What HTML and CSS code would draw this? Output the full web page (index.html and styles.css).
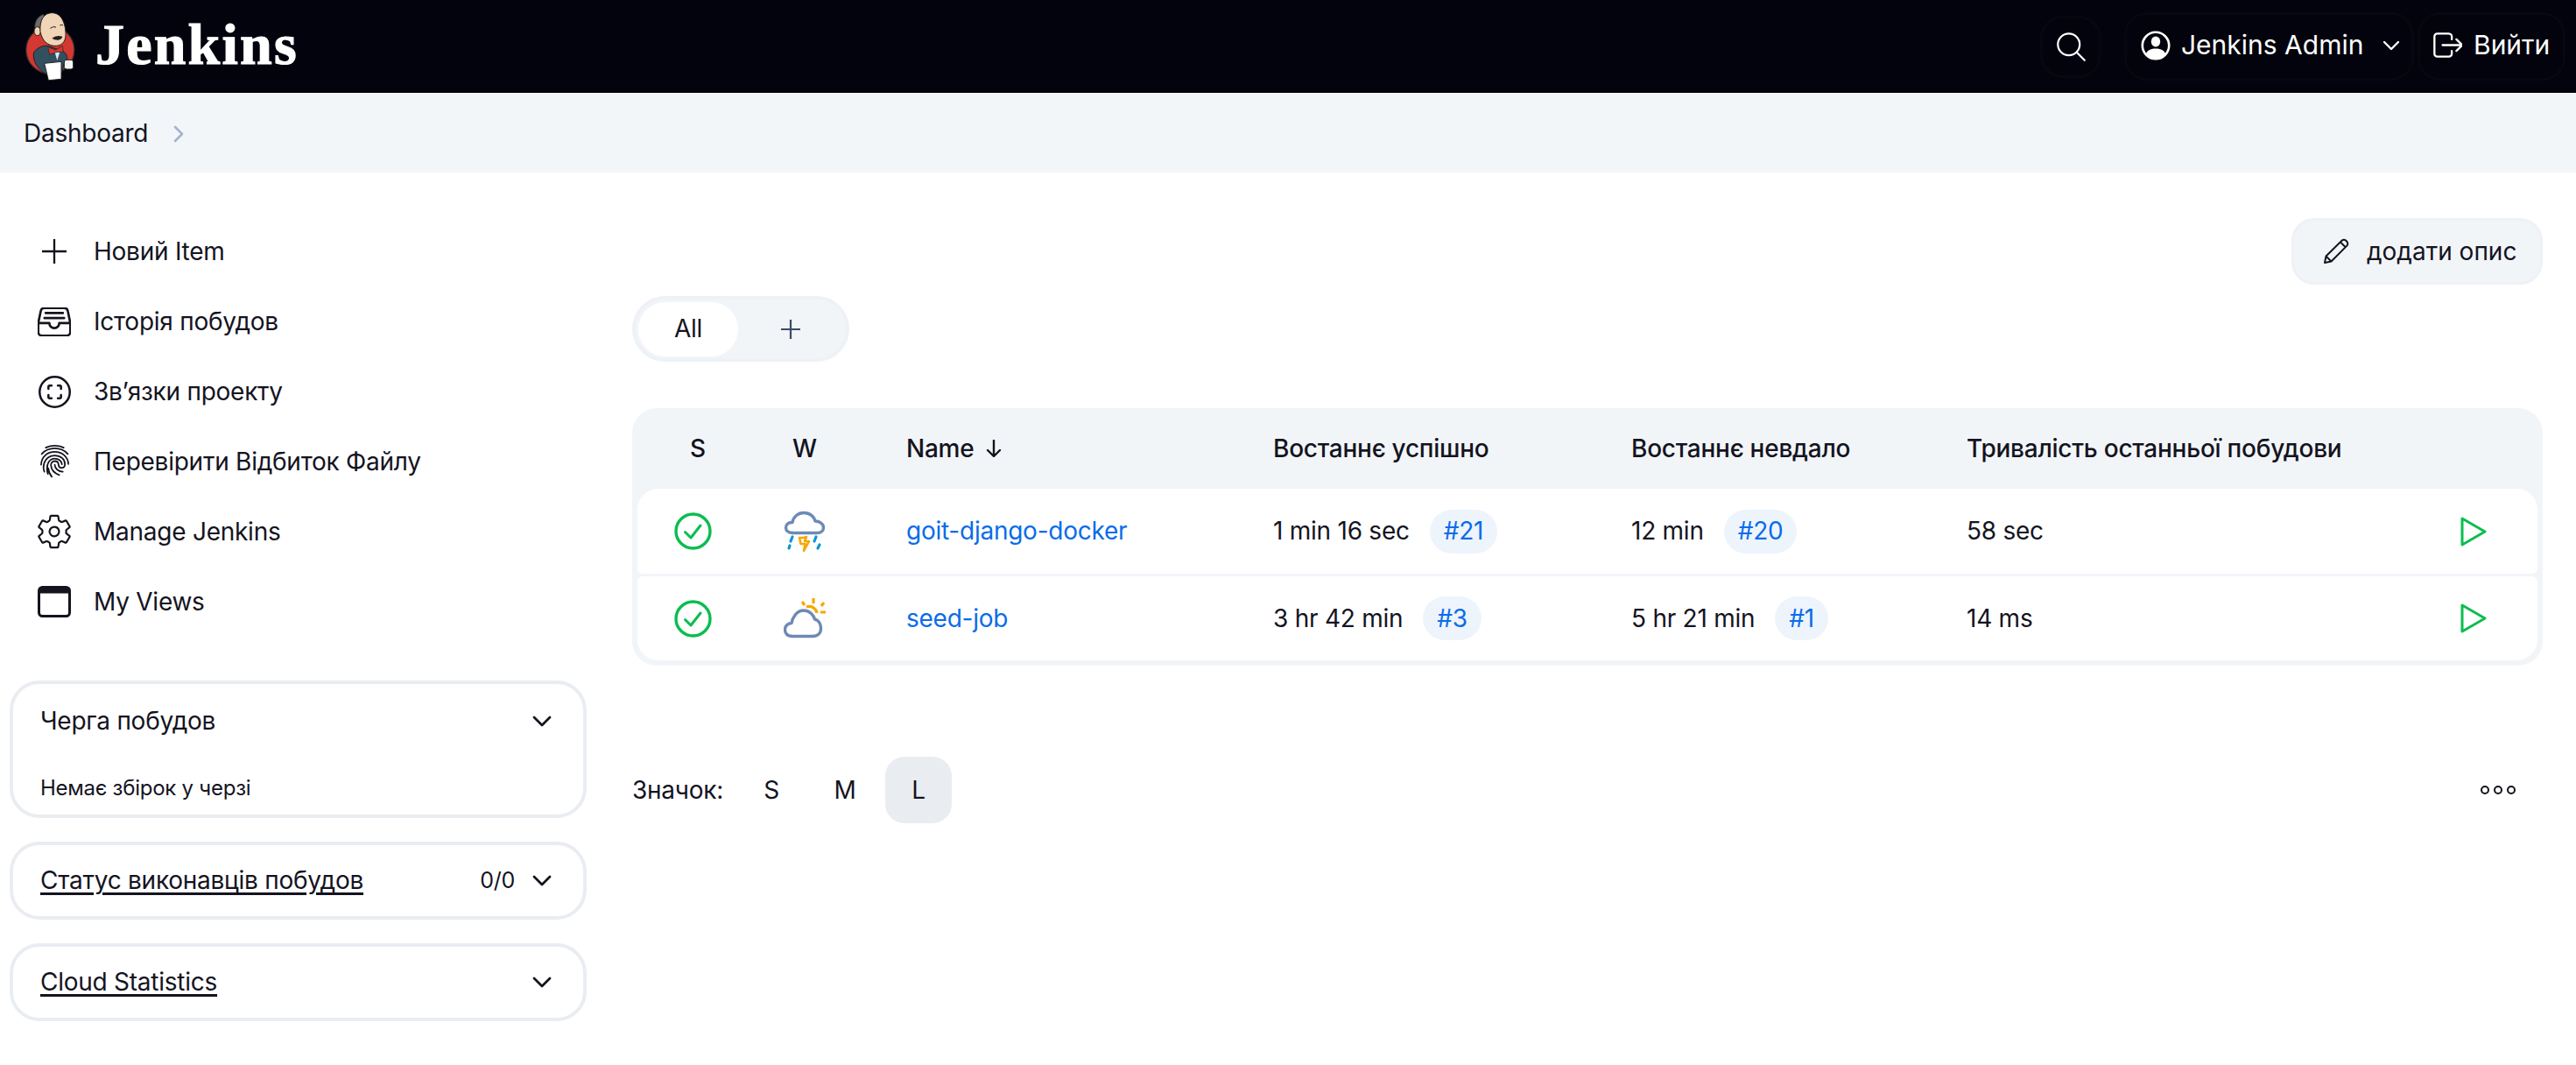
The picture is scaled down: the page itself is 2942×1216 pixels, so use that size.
FILE: index.html
```html
<!DOCTYPE html>
<html lang="uk">
<head>
<meta charset="utf-8">
<title>Dashboard [Jenkins]</title>
<link rel="stylesheet" href="styles.css">
</head>
<body>
<header class="topbar">
  <a class="brand">
    <svg class="mascot" viewBox="0 -9 240 318">
      <ellipse cx="112" cy="162" rx="83" ry="82" fill="#d33833" stroke="#2a2a2a" stroke-width="4"/>
      <path d="M60 92C55 65 70 45 90 40L100 80Z" fill="#6d6b6d" stroke="#231f20" stroke-width="3"/>
      <path d="M56 170C75 148 95 145 110 150L158 168C176 182 172 200 160 206L152 240L96 244C66 225 50 195 56 170Z" fill="#335061" stroke="#231f20" stroke-width="3"/>
      <ellipse cx="68" cy="98" rx="11" ry="15" fill="#f0d6b7" stroke="#231f20" stroke-width="3"/>
      <path d="M78 100C75 60 90 35 118 35C150 35 165 70 165 110C165 135 150 150 125 148C100 145 85 130 78 100Z" fill="#f0d6b7" stroke="#231f20" stroke-width="3"/>
      <path d="M112 88q10-8 20-4M145 78q6-4 11 0" fill="none" stroke="#231f20" stroke-width="3"/>
      <path d="M118 122q14-12 36-6q-2 10-16 12q-12 0-20-6Z" fill="#231f20"/>
      <path d="M128 170L146 166L136 198Z" fill="#dcebf5"/>
      <path d="M104 152L130 162L154 148L157 168L132 170L110 178Z" fill="#d33833" stroke="#231f20" stroke-width="2"/>
      <path d="M92 208L150 202L150 262L106 266Z" fill="#fff" stroke="#231f20" stroke-width="3"/>
      <rect x="160" y="196" width="31" height="32" rx="8" fill="#f4f4f4" stroke="#231f20" stroke-width="3"/>
    </svg>
    <span class="wordmark">Jenkins</span>
  </a>
  <div class="top-actions">
    <a class="top-btn top-search">
      <svg class="ico-search" viewBox="48 48 416 416"><path class="st" stroke-width="28" d="M221.09 64a157.09 157.09 0 10157.09 157.09A157.1 157.1 0 00221.09 64z"/><path class="st" stroke-width="28" d="M338.29 338.29L448 448"/></svg>
    </a>
    <a class="top-btn top-user">
      <svg class="ico-user" viewBox="0 0 34 34"><circle class="st" cx="17" cy="17" r="15.2" stroke-width="2.6"/><ellipse cx="17" cy="12.6" rx="5.2" ry="6" fill="currentColor"/><path d="M5.6 26.6C8 22 12 20.6 17 20.6s9 1.4 11.4 6C25.6 30 21.6 32 17 32S8.400 30 5.600 26.600Z" fill="currentColor"/></svg>
      <span class="user-name">Jenkins Admin</span>
      <svg class="ico-caret" viewBox="0 0 20 12"><path class="st" stroke-width="2.4" d="M2 2l8 8 8-8"/></svg>
    </a>
    <a class="top-btn top-logout">
      <svg class="ico-logout" viewBox="48 80 400 352"><path class="st" stroke-width="28" d="M304 336v40a40 40 0 01-40 40H104a40 40 0 01-40-40V136a40 40 0 0140-40h152c22.090 0 48 17.910 48 40v40M368 336l80-80-80-80M176 256h256"/></svg>
      <span>Вийти</span>
    </a>
  </div>
</header>

<nav class="crumbs">
  <a class="crumb">Dashboard</a>
  <svg class="crumb-sep" viewBox="0 0 12 20"><path class="st" stroke-width="2.600" d="M2 2l8 8-8 8"/></svg>
</nav>

<div class="layout">
  <aside class="sidebar">
    <ul class="tasks">
      <li class="task"><span class="task-ico"><svg class="i-plus" viewBox="112 112 288 288"><path class="st" stroke-width="24" d="M256 112v288M400 256H112"/></svg></span>Новий Item</li>
      <li class="task"><span class="task-ico"><svg class="i-38" viewBox="40 72 432 368" preserveAspectRatio="none"><path class="st" stroke-width="30" d="M384 80H128c-26 0-43 14-48 40L48 272v112a48.140 48.140 0 0048 48h320a48.140 48.140 0 0048-48V272l-32-152c-5-27-23-40-48-40z"/><path class="st" stroke-width="30" d="M48 272h144M320 272h144M192 272a64 64 0 00128 0M144 144h224M128 208h256"/></svg></span>Історія побудов</li>
      <li class="task"><span class="task-ico"><svg class="i-36" viewBox="50 50 412 412"><path class="st" stroke-width="28" d="M256 64C150 64 64 150 64 256s86 192 192 192 192-86 192-192S362 64 256 64z"/><path class="st" stroke-width="28" d="M296 176h24a16 16 0 0116 16v24M216 336h-24a16 16 0 01-16-16v-24M336 296v24a16 16 0 01-16 16h-24M176 216v-24a16 16 0 0116-16h24"/></svg></span>Зв’язки проекту</li>
      <li class="task"><span class="task-ico"><svg class="i-finger" viewBox="40 20 432 472"><path class="st" stroke-width="22" d="M130 60C200 24 312 24 382 60M72 150C130 85 200 70 256 70S385 85 440 150M64 300C70 190 150 120 256 120S445 190 448 290M110 400C90 350 100 300 110 270C130 210 190 170 256 170C340 170 400 225 400 290C400 325 380 345 355 345C325 345 312 325 310 300C308 270 285 250 256 250C225 250 200 275 203 310C208 370 250 420 320 445M160 430C145 390 145 340 155 300C170 250 210 215 256 215C310 215 355 250 358 295M256 300C258 350 300 395 370 400M215 470C190 440 170 400 165 350"/></svg></span>Перевірити Відбиток Файлу</li>
      <li class="task"><span class="task-ico"><svg class="i-gear" viewBox="32 32 448 448"><path class="st" stroke-width="26" d="M262.290 192.310a64 64 0 1057.400 57.400 64.130 64.130 0 00-57.400-57.400zM416.390 256a154.340 154.340 0 01-1.530 20.790l45.210 35.460a10.810 10.810 0 012.450 13.750l-42.770 74a10.810 10.810 0 01-13.140 4.590l-44.900-18.080a16.110 16.110 0 00-15.170 1.750A164.480 164.480 0 01325 400.800a15.940 15.940 0 00-8.820 12.140l-6.730 47.890a11.080 11.080 0 01-10.680 9.170h-85.540a11.110 11.110 0 01-10.690-8.870l-6.720-47.820a16.070 16.070 0 00-9-12.220 155.300 155.300 0 01-21.460-12.570 16 16 0 00-15.110-1.710l-44.890 18.070a10.810 10.810 0 01-13.140-4.580l-42.770-74a10.800 10.800 0 012.450-13.750l38.210-30a16.050 16.050 0 006-14.080c-.36-4.170-.58-8.330-.58-12.500s.21-8.270.58-12.350a16 16 0 00-6.070-13.940l-38.190-30A10.810 10.810 0 0149.48 186l42.770-74a10.810 10.810 0 0113.140-4.590l44.900 18.080a16.110 16.110 0 0015.170-1.750A164.480 164.480 0 01187 111.200a15.940 15.940 0 008.820-12.140l6.730-47.890A11.080 11.080 0 01213.230 42h85.540a11.110 11.110 0 0110.690 8.870l6.720 47.820a16.070 16.070 0 009 12.220 155.300 155.300 0 0121.460 12.570 16 16 0 0015.110 1.710l44.890-18.070a10.810 10.810 0 0113.140 4.580l42.770 74a10.800 10.800 0 01-2.450 13.750l-38.210 30a16.050 16.050 0 00-6.050 14.080c.33 4.140.55 8.300.55 12.470z"/></svg></span>Manage Jenkins</li>
      <li class="task"><span class="task-ico"><svg class="i-views" viewBox="0 0 38 36"><rect class="st" x="1.500" y="1.500" width="35" height="33" rx="4" stroke-width="3"/><path d="M1.500 5.500a4 4 0 014-4h27a4 4 0 014 4v3h-35z" fill="currentColor"/></svg></span>My Views</li>
    </ul>

    <section class="pane pane-queue">
      <div class="pane-head"><span class="pane-title">Черга побудов</span><svg class="pane-caret" viewBox="0 0 22 13"><path class="st" stroke-width="2.800" d="M2 2l9 9 9-9"/></svg></div>
      <p class="pane-empty">Немає збірок у черзі</p>
    </section>
    <section class="pane">
      <div class="pane-head"><a class="pane-title pane-link">Статус виконавців побудов</a><span class="pane-count">0/0</span><svg class="pane-caret" viewBox="0 0 22 13"><path class="st" stroke-width="2.800" d="M2 2l9 9 9-9"/></svg></div>
    </section>
    <section class="pane">
      <div class="pane-head"><a class="pane-title pane-link">Cloud Statistics</a><svg class="pane-caret" viewBox="0 0 22 13"><path class="st" stroke-width="2.800" d="M2 2l9 9 9-9"/></svg></div>
    </section>
  </aside>

  <main class="main">
    <a class="add-desc">
      <svg class="ico-pencil" viewBox="0 0 30 30"><path class="st" stroke-width="2" stroke-linejoin="round" d="M2 28l1.500-7.500L21.500 2.800a3.400 3.400 0 014.800 0l1 1a3.400 3.400 0 010 4.800L9.500 26.500ZM3.500 20.500l6 6M20 4.500l5.500 5.500"/></svg>
      <span>додати опис</span>
    </a>

    <div class="tabs">
      <a class="tab tab-active">All</a>
      <a class="tab tab-add"><svg class="ico-tabplus" viewBox="0 0 22 22"><path class="st" stroke-width="2.200" d="M11 0v22M0 11h22"/></svg></a>
    </div>

    <div class="jobs">
      <div class="jobs-row jobs-head">
        <span class="cell-center">S</span>
        <span class="cell-w">W</span>
        <span class="cell-name">Name <svg class="ico-sort" viewBox="0 0 18 20"><path class="st" stroke-width="2.400" d="M9 1v18M2 12l7 7 7-7"/></svg></span>
        <span>Востаннє успішно</span>
        <span>Востаннє невдало</span>
        <span>Тривалість останньої побудови</span>
        <span></span>
      </div>
      <div class="jobs-row job job-first">
        <svg class="ico-status" viewBox="0 0 43 43"><circle class="st" cx="21.500" cy="21.500" r="19.500" stroke-width="3.400"/><path class="st" stroke-width="3" d="M12.500 22.500l6.500 6.500 11-14"/></svg>
        <span class="cell-w">
          <svg class="ico-weather" viewBox="0 0 48 48"><path d="M11 25.500C5 25.500 2.500 22.500 2.500 19.500C2.500 15.500 6 13 10 13.500C11 7 16.500 2.500 23 2.500C30 2.500 35 7 36 12C41 12 45.500 15 45.500 19.500C45.500 23 42.500 25.500 38 25.500Z" fill="none" stroke="#6d8ab5" stroke-width="3.400" stroke-linejoin="round"/><path d="M18 31h5l3-1-2 5h5L23 46l1.500-8h-5Z" fill="none" stroke="#f5a800" stroke-width="2.600" stroke-linejoin="round"/><path d="M10 30l-2 5M7 40l-1 3M37 30l-2 5M41 39l-2 4" fill="none" stroke="#0a96d8" stroke-width="3.200" stroke-linecap="round"/></svg>
        </span>
        <a class="job-link">goit-django-docker</a>
        <span class="build"><span>1 min 16 sec</span><a class="badge">#21</a></span>
        <span class="build"><span>12 min</span><a class="badge">#20</a></span>
        <span>58 sec</span>
        <svg class="ico-play" viewBox="0 0 30 34"><path class="st" stroke-width="3" stroke-linejoin="round" d="M2 2L28 17 2 32Z"/></svg>
      </div>
      <div class="jobs-row job job-last">
        <svg class="ico-status" viewBox="0 0 43 43"><circle class="st" cx="21.500" cy="21.500" r="19.500" stroke-width="3.400"/><path class="st" stroke-width="3" d="M12.500 22.500l6.500 6.500 11-14"/></svg>
        <span class="cell-w">
          <svg class="ico-weather" viewBox="0 0 48 48"><path d="M26 11a9 9 0 0112 7M38 23" fill="none" stroke="#f5a800" stroke-width="3.200"/><path d="M34 1v6M21 5l3 4M46 6l-3 4M42 17h6" fill="none" stroke="#f5a800" stroke-width="3.200"/><path d="M10 44.500C4 44.500 1.500 41 1.500 37C1.500 33 4.500 29.500 9 29.500C10 23 15 15 23 15C30 15 34.500 21 35.500 25C39.500 26 42.500 30 42.500 35.500C42.500 41 39 44.500 33 44.500Z" fill="#fff" stroke="#6d8ab5" stroke-width="3.400" stroke-linejoin="round"/></svg>
        </span>
        <a class="job-link">seed-job</a>
        <span class="build"><span>3 hr 42 min</span><a class="badge">#3</a></span>
        <span class="build"><span>5 hr 21 min</span><a class="badge">#1</a></span>
        <span>14 ms</span>
        <svg class="ico-play" viewBox="0 0 30 34"><path class="st" stroke-width="3" stroke-linejoin="round" d="M2 2L28 17 2 32Z"/></svg>
      </div>
    </div>

    <div class="legend">
      <span class="legend-label">Значок:</span>
      <a class="size-btn">S</a>
      <a class="size-btn">M</a>
      <a class="size-btn size-active">L</a>
      <svg class="ico-dots" viewBox="0 0 42 12"><circle class="st" cx="6" cy="6" r="4" stroke-width="2"/><circle class="st" cx="21" cy="6" r="4" stroke-width="2"/><circle class="st" cx="36" cy="6" r="4" stroke-width="2"/></svg>
    </div>
  </main>
</div>
</body>
</html>
```
FILE: styles.css
```css
* { box-sizing: border-box; }
html, body { margin: 0; padding: 0; }
body {
  background: #fff;
  color: #14141f;
  font-family: Inter, "Noto Sans", sans-serif;
  font-size: 28px;
  font-weight: 400;
  letter-spacing: -0.25px;
  line-height: 1.3;
}
a { color: inherit; text-decoration: none; }
svg { display: block; flex: none; }
.st { fill: none; stroke: currentColor; stroke-linecap: round; stroke-linejoin: round; }

/* header */
.topbar {
  height: 106px;
  background: #02030c;
  color: #fff;
  display: flex;
  align-items: center;
  justify-content: space-between;
  padding: 0 12px 0 20px;
}
.brand { display: flex; align-items: center; gap: 10px; }
.mascot { width: 80px; height: 106px; }
.wordmark {
  font-family: "Liberation Serif", serif;
  font-weight: 700;
  font-size: 66px;
  letter-spacing: 2.2px;
  line-height: 1;
  -webkit-text-stroke: 1.2px #fff;
  margin-top: -4px;
  margin-left: -1px;
}
.top-actions { display: flex; align-items: center; gap: 4px; }
.top-btn {
  display: flex;
  align-items: center;
  border: 3px solid #06070f;
  border-radius: 26px;
  height: 78px;
  font-size: 30px;
  letter-spacing: 0;
  padding-bottom: 3px;
}
.top-search {
  width: 70px;
  height: 71px;
  justify-content: center;
  margin-right: 22px;
  padding-bottom: 0;
}
.ico-search { width: 33px; height: 33px; }
.top-user { width: 331px; padding-left: 16px; }
.ico-user { width: 34px; height: 34px; }
.user-name { margin-left: 12px; }
.ico-caret { width: 20px; height: 12px; margin-left: 22px; }
.top-logout { width: 169px; padding-left: 15px; gap: 13px; }
.ico-logout { width: 33px; height: 33px; }

/* breadcrumb */
.crumbs {
  height: 91px;
  background: #f3f6f9;
  display: flex;
  align-items: center;
  padding-left: 27px;
  padding-top: 2px;
  gap: 29px;
}
.crumb-sep { width: 12px; height: 20px; color: #a4b4cf; }

/* layout */
.layout { display: flex; align-items: flex-start; padding: 0 38px 0 11px; gap: 52px; }
.sidebar { width: 659px; flex: none; padding-top: 50px; }
.tasks { list-style: none; margin: 0 0 50px; padding: 0; }
.task { display: flex; align-items: center; height: 80px; }
.task-ico { width: 96px; height: 80px; display: flex; align-items: center; justify-content: center; padding-left: 6px; }
.i-plus { width: 28px; height: 28px; }
.i-38 { width: 38px; height: 33px; }
.i-36 { width: 37px; height: 37px; }
.i-finger { width: 35px; height: 40px; }
.i-gear { width: 38px; height: 40px; }
.i-views { width: 38px; height: 36px; }

.pane {
  border: 4px solid #e9edf2;
  border-radius: 34px;
  margin-bottom: 27px;
}
.pane-queue { height: 157px; }
.pane-head {
  display: flex;
  align-items: center;
  height: 81px;
  padding: 0 36px 0 31px;
}
.pane-title { flex: 1; }
.pane-link { text-decoration: underline; text-decoration-thickness: 3px; text-underline-offset: 4px; }
.pane-count { font-size: 25px; margin-right: 20px; }
.pane-caret { width: 22px; height: 13px; }
.pane-empty { margin: 19px 0 0; padding: 0 31px; font-size: 24px; line-height: 32px; }
.pane-queue .pane-head { height: 84px; }

/* main */
.main { flex: 1; min-width: 0; display: flex; flex-direction: column; padding-top: 52px; }
.add-desc {
  align-self: flex-end;
  width: 287px;
  height: 76px;
  display: flex;
  align-items: center;
  gap: 20px;
  padding-left: 33px;
  background: #f2f5f8;
  border: 3px solid #eef1f5;
  border-radius: 26px;
  letter-spacing: 0;
}
.ico-pencil { width: 30px; height: 30px; }

.tabs {
  margin-top: 13px;
  width: 248px;
  height: 75px;
  background: #f2f5f8;
  border: 4px solid #eef1f5;
  border-radius: 38px;
  display: flex;
  align-items: center;
  padding: 0 3px;
}
.tab { display: flex; align-items: center; justify-content: center; }
.tab-active { width: 114px; height: 62px; background: #fff; border-radius: 31px; }
.tab-add { flex: 1; color: #3b4a66; }
.ico-tabplus { width: 22px; height: 22px; }

.jobs {
  margin-top: 53px;
  background: #f2f5f8;
  border-radius: 28px;
  padding: 0 6px 6px;
}
.jobs-row {
  display: grid;
  grid-template-columns: 138px 169px 419px 409px 383px 1fr auto;
  align-items: center;
}
.jobs-head { height: 92px; font-weight: 450; }
.cell-center { text-align: center; }
.cell-w { display: flex; justify-content: center; padding-right: 63px; }
.cell-name { display: flex; align-items: center; gap: 14px; }
.ico-sort { width: 18px; height: 20px; }
.job { height: 97px; background: #fff; margin-bottom: 3px; border-radius: 6px; }
.job-first { border-top-left-radius: 24px; border-top-right-radius: 24px; }
.job-last { height: 96px; margin-bottom: 0; border-bottom-left-radius: 24px; border-bottom-right-radius: 24px; }
.ico-status { width: 43px; height: 43px; color: #0bbd4f; margin-left: 42px; }
.ico-weather { width: 48px; height: 48px; }
.job-link { color: #0a6ce8; }
.build { display: flex; align-items: center; gap: 23px; }
.badge {
  color: #0a6ce8;
  background: #eef4fc;
  border-radius: 25px;
  height: 50px;
  padding: 0 16px;
  display: flex;
  align-items: center;
}
.ico-play { width: 30px; height: 34px; color: #0bbd4f; justify-self: end; margin-right: 58px; }

/* icon legend */
.legend { margin-top: 104px; display: flex; align-items: center; gap: 8px; }
.legend-label { margin-right: 9px; }
.size-btn {
  width: 76px;
  height: 76px;
  display: flex;
  align-items: center;
  justify-content: center;
  border-radius: 22px;
}
.size-active { background: #e9edf2; }
.ico-dots { width: 42px; height: 12px; margin-left: auto; margin-right: 30px; }
```
